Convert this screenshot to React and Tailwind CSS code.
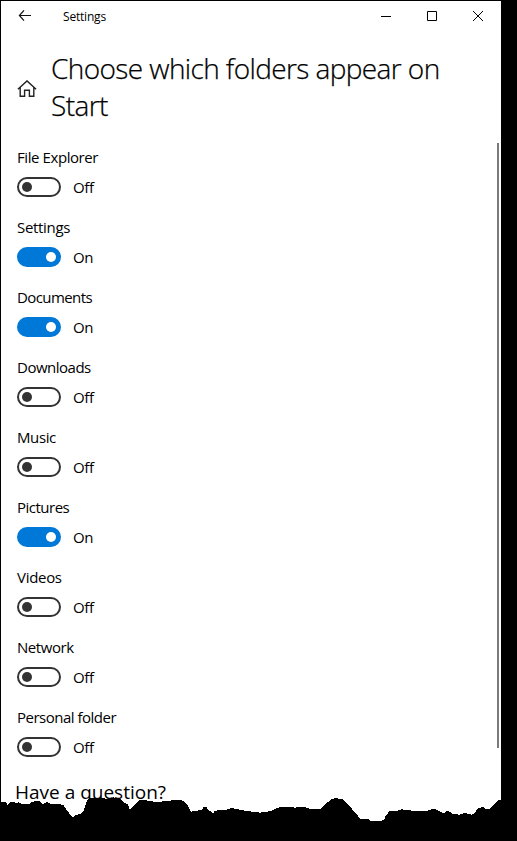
import React from "react";

const folders = [
  { name: "File Explorer", on: false, tracking: "tracking-[-0.42px]" },
  { name: "Settings", on: true, tracking: "tracking-[-0.32px]" },
  { name: "Documents", on: true, tracking: "tracking-[-0.58px]" },
  { name: "Downloads", on: false, tracking: "tracking-[-0.5px]" },
  { name: "Music", on: false, tracking: "tracking-[-0.38px]" },
  { name: "Pictures", on: true, tracking: "tracking-[-0.5px]" },
  { name: "Videos", on: false, tracking: "tracking-[-0.3px]" },
  { name: "Network", on: false, tracking: "tracking-[-0.45px]" },
  { name: "Personal folder", on: false, tracking: "tracking-[-0.5px]" },
];

const Toggle = ({ on }) => (
  <span
    className={
      on
        ? "flex h-5 w-11 items-center justify-end rounded-full bg-[#0078d7] px-[5px]"
        : "flex h-5 w-11 items-center rounded-full border-2 border-[#333333] px-[3px]"
    }
  >
    <span
      className={
        on
          ? "size-[10px] rounded-full bg-white"
          : "size-[10px] rounded-full bg-[#333333]"
      }
    />
  </span>
);

const FolderRow = ({ name, on, tracking }) => (
  <div className="h-[70px]">
    <div className={`h-[30px] text-[15px] leading-5 whitespace-nowrap ${tracking}`}>
      {name}
    </div>
    <button className="flex h-5 items-center gap-3" role="switch" aria-checked={on}>
      <Toggle on={on} />
      <span className="text-[15px] leading-5 tracking-[-0.4px]">
        {on ? "On" : "Off"}
      </span>
    </button>
  </div>
);

const TitleBar = () => (
  <header className="flex h-8 shrink-0 items-center justify-between">
    <div className="flex items-center">
      <button className="flex h-8 w-12 items-center justify-center pb-[2px]" aria-label="Back">
        <svg width="14" height="12" viewBox="0 0 14 12" fill="none" stroke="#111" strokeWidth="1.2">
          <path d="M6 .4 1.4 5.5 6 10.6M1.4 5.5H13" />
        </svg>
      </button>
      <span className="ml-[14px] text-[12px] leading-4 tracking-[-0.2px]">Settings</span>
    </div>
    <div className="flex">
      <button className="flex h-8 w-[46px] items-center justify-center" aria-label="Minimize">
        <svg width="10" height="10" viewBox="0 0 10 10" shapeRendering="crispEdges">
          <path d="M0 4h10v1H0z" />
        </svg>
      </button>
      <button className="flex h-8 w-[46px] items-center justify-center pb-[2px]" aria-label="Maximize">
        <svg width="10" height="10" viewBox="0 0 10 10" fill="none" stroke="#000">
          <path d="M.5.5h9v9h-9z" />
        </svg>
      </button>
      <button className="flex h-8 w-[46px] items-center justify-center pb-[2px]" aria-label="Close">
        <svg width="10" height="10" viewBox="0 0 10 10" fill="none" stroke="#000">
          <path d="m0 0 10 10M10 0 0 10" />
        </svg>
      </button>
    </div>
  </header>
);

// ragged bottom edge, drawn at three units per pixel
const TornEdge = () => (
  <svg
    className="absolute bottom-0 left-0"
    width="517"
    height="71"
    viewBox="0 0 1551 213"
    shapeRendering="crispEdges"
  >
    <path d="M0 97H18L22 104 32 97H45L48 101 55 97 65 101H90L95 95 120 93 128 103 142 96 152 101 190 104 200 120 212 136 220 143 226 135 243 132 252 120 260 95 268 83H310L318 88 340 82 362 88 372 98 383 103 390 119 405 105 418 90 450 92 470 97 490 94 525 90H545L555 96 565 109 573 125 605 120 610 112H620L627 122 640 129 645 122 685 118 695 114 710 117 735 122 780 128 815 123 830 114 842 111H880L885 116 890 111H915L920 115 960 118 975 104 992 89 1005 84 1030 88 1045 105 1070 132 1080 147H1104L1112 154H1140L1152 149 1158 136 1168 124H1185L1205 118 1245 123H1280L1295 118H1308L1332 131 1337 124H1347L1356 131 1377 134 1394 129 1415 134 1422 131 1434 115 1449 111 1458 117H1470L1482 102 1494 91H1503V0H1551V213H0z" />
  </svg>
);

export default function App() {
  return (
    <div className="relative h-[841px] w-[517px] overflow-hidden bg-black pt-px pl-px font-['Open_Sans','Noto_Sans',sans-serif] text-black">
      <div className="flex h-[840px] w-[500px] flex-col bg-white">
        <TitleBar />
        <div className="flex h-[109px] shrink-0 pt-[17px] pl-4">
          <svg
            className="mt-[30px] shrink-0"
            width="20"
            height="18"
            viewBox="0 0 20 18"
            fill="none"
            stroke="#222"
            strokeWidth="1.4"
          >
            <path d="M.9 9.3 10 .9l9.1 8.4M3.2 7.5v8.8h4.4v-6h4.8v6h4.4V7.5" />
          </svg>
          <h1 className="ml-[14px] w-[430px] text-[28px] leading-[37px] font-light tracking-[-0.6px] [-webkit-text-stroke:0.25px_black]">
            Choose which folders appear on
            <br />
            Start
          </h1>
        </div>
        <div className="flex">
          <main className="flex-1 pt-[5px] pl-4">
            {folders.map((folder) => (
              <FolderRow key={folder.name} {...folder} />
            ))}
            <h2 className="-ml-[2px] pt-[2px] text-[19px] leading-[26px] whitespace-nowrap">
              Have a question?
            </h2>
          </main>
          <div className="mt-px mr-[2px] h-[605px] w-[2px] bg-[#7a7a7a]" />
        </div>
      </div>
      <TornEdge />
    </div>
  );
}
